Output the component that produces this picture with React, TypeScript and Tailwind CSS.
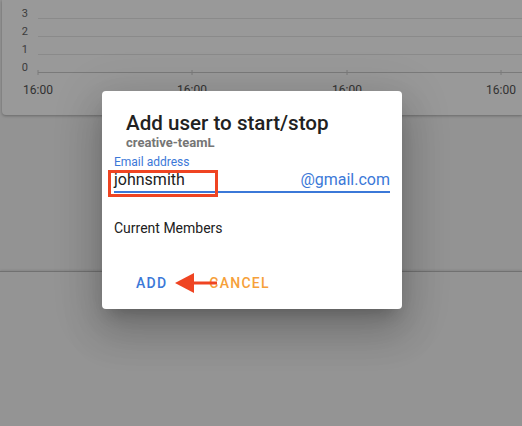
import React from 'react';

const yLabels = ['3', '2', '1', '0'];
const ticks = [38, 192, 347, 501];

export default function App() {
  return (
    <div className="relative w-[522px] h-[426px] overflow-hidden bg-[#f5f5f5] font-['Roboto',sans-serif]">
      {/* Chart card */}
      <div className="ml-[2px] h-[115px] bg-white rounded-bl-[4px] shadow-[0_1px_3px_rgba(0,0,0,0.3)] relative">
        <div className="pt-[3px] flex flex-col">
          {yLabels.map((l) => (
            <div key={l} className="flex items-end h-[18px]">
              <span className="w-[26px] text-right text-[11px] leading-[14px] text-[#666]">{l}</span>
              <div className={`flex-1 ml-[10px] mb-[2px] ${l === '0' ? 'border-b border-[#ccc]' : 'border-b border-[#e6e6e6]'}`} />
            </div>
          ))}
        </div>
        <svg className="absolute left-0 top-[70px]" width="522" height="6">
          {ticks.map((x) => (
            <line key={x} x1={x - 2} x2={x - 2} y1="0" y2="5" stroke="#ccc" />
          ))}
        </svg>
        <div className="absolute left-0 top-[82px] w-full h-[16px]">
          {ticks.map((x) => (
            <span
              key={x}
              className="absolute text-[12px] leading-[16px] text-[#555] -translate-x-1/2"
              style={{ left: x - 2 }}
            >
              16:00
            </span>
          ))}
        </div>
      </div>

      {/* Lower card */}
      <div className="mt-[156px] h-[200px] bg-[#f7f7f7] border-t border-[#bdbdbd] shadow-[0_-1px_2px_rgba(0,0,0,0.1)]" />

      {/* Overlay */}
      <div className="absolute inset-0 bg-black/40" />

      {/* Dialog */}
      <div className="absolute left-[102px] top-[91px] w-[300px] h-[218px] bg-white rounded-[4px] shadow-[0_11px_15px_-7px_rgba(0,0,0,0.2),0_24px_38px_3px_rgba(0,0,0,0.14),0_9px_46px_8px_rgba(0,0,0,0.12)]">
        <div className="px-[24px] pt-[19px]">
          <h2 className="text-[20.6px] leading-[26px] font-medium text-[#212121]">Add user to start/stop</h2>
          <div className="text-[13px] leading-[14px] font-bold text-[#757575]">creative-teamL</div>
        </div>
        <div className="px-[12px] mt-[5px]">
          <div className="text-[12px] leading-[14px] text-[#3b78d8]">Email address</div>
          <div className="relative flex items-end justify-between border-b-2 border-[#3b78d8] h-[24px] pb-[1px] w-[276px]">
            <span className="text-[16px] leading-[20px] text-[#212121]">johnsmith</span>
            <span className="text-[16px] leading-[20px] text-[#3b78d8]">@gmail.com</span>
            <div className="absolute left-[-6px] top-[1px] w-[110px] h-[27px] border-[3px] border-[#ef4422]" />
          </div>
          <div className="mt-[26px] text-[14px] leading-[18px] text-[#212121]">Current Members</div>
        </div>
        <div className="relative flex items-center pl-[34px] mt-[38px]">
          <button className="text-[14px] leading-[16px] font-medium tracking-[1.25px] text-[#3b78d8]">ADD</button>
          <button className="ml-[42px] text-[14px] leading-[16px] font-medium tracking-[1.25px] text-[#f6a03a]">CANCEL</button>
          <svg className="absolute left-[73px] top-[-3px]" width="44" height="22" viewBox="0 0 44 22">
            <polygon points="0,11 19,1 19,21" fill="#ef4422" />
            <rect x="18" y="9.5" width="24" height="3" fill="#ef4422" />
          </svg>
        </div>
      </div>
    </div>
  );
}
